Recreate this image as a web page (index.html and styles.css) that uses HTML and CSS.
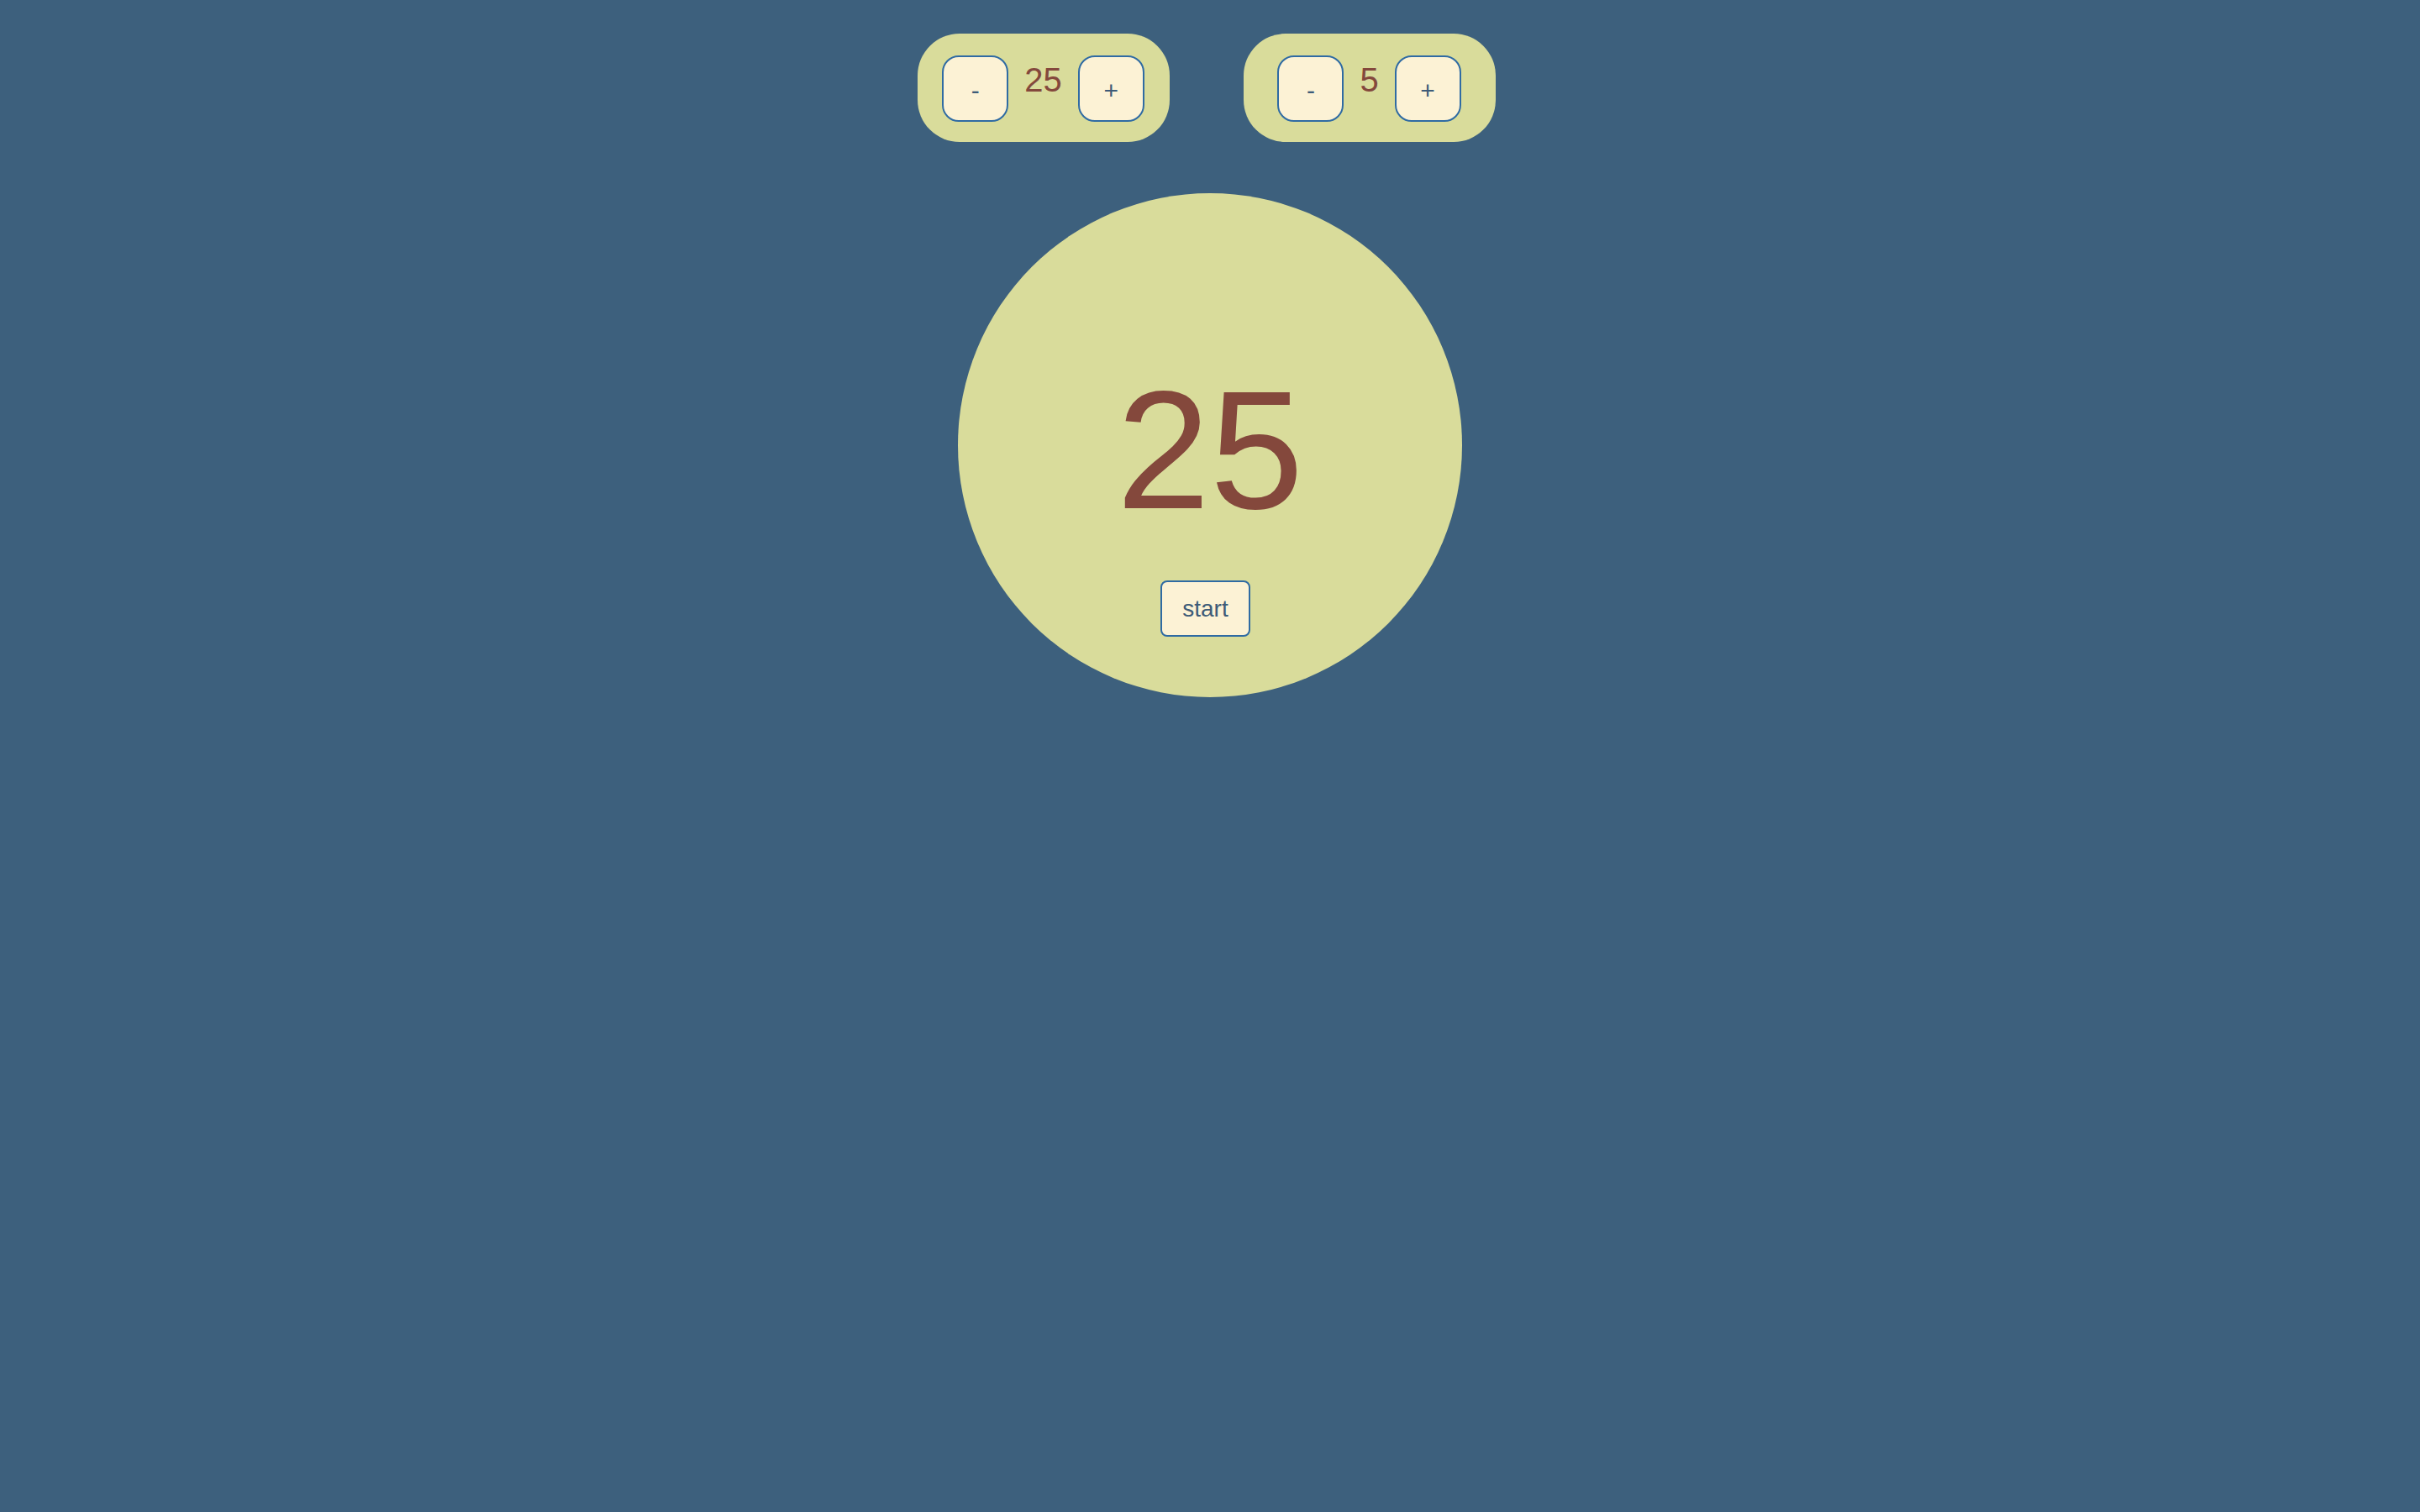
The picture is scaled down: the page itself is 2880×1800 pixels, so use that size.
FILE: index.html
```html
<!DOCTYPE html>
<html lang="en">
<head>
<meta charset="utf-8">
<title>Pomodoro</title>
<link rel="stylesheet" href="styles.css">
</head>
<body>
<div class="app">
  <div class="settings">
    <div class="pill">
      <button class="step">-</button>
      <span class="value">25</span>
      <button class="step">+</button>
    </div>
    <div class="pill">
      <button class="step">-</button>
      <span class="value">5</span>
      <button class="step">+</button>
    </div>
  </div>
  <div class="clock">
    <div class="time">25</div>
    <button class="start">start</button>
  </div>
</div>
</body>
</html>
```
FILE: styles.css
```css
html, body {
  margin: 0;
  padding: 0;
  background: #3d607d;
  font-family: "Liberation Sans", Arial, Helvetica, sans-serif;
  min-height: 100%;
}
body {
  height: 1800px;
}
.app {
  display: flex;
  flex-direction: column;
  align-items: center;
  padding-top: 40px;
}
.settings {
  display: flex;
  gap: 88px;
  padding-right: 9px;
}
.pill {
  box-sizing: border-box;
  width: 300px;
  height: 129px;
  background: #d9dc9b;
  border-radius: 50px;
  display: flex;
  justify-content: center;
  align-items: flex-start;
  gap: 19px;
  padding-top: 26px;
}
.step {
  box-sizing: border-box;
  width: 79px;
  height: 79px;
  margin: 0;
  padding: 4px 0 0 0;
  background: #fcf2d5;
  border: 2px solid #2f6ba3;
  border-radius: 20px;
  color: #3d5b78;
  font-family: "Liberation Sans", Arial, sans-serif;
  font-size: 30px;
  line-height: 1;
  display: flex;
  align-items: center;
  justify-content: center;
}
.value {
  margin-top: 6px;
  color: #84483c;
  font-size: 40px;
  line-height: 46px;
}
.clock {
  box-sizing: border-box;
  margin-top: 61px;
  width: 600px;
  height: 600px;
  border-radius: 50%;
  background: #d9dc9b;
  display: flex;
  flex-direction: column;
  align-items: center;
  padding-top: 194px;
}
.time {
  color: #84483c;
  font-size: 200px;
  line-height: 223px;
}
.start {
  box-sizing: border-box;
  margin: 44px 11px 0 0;
  width: 107px;
  height: 67px;
  padding: 0;
  background: #fcf2d5;
  border: 2px solid #2f6ba3;
  border-radius: 8px;
  color: #3d5b78;
  font-family: "Liberation Sans", Arial, sans-serif;
  font-size: 28px;
  line-height: 1;
}
```
